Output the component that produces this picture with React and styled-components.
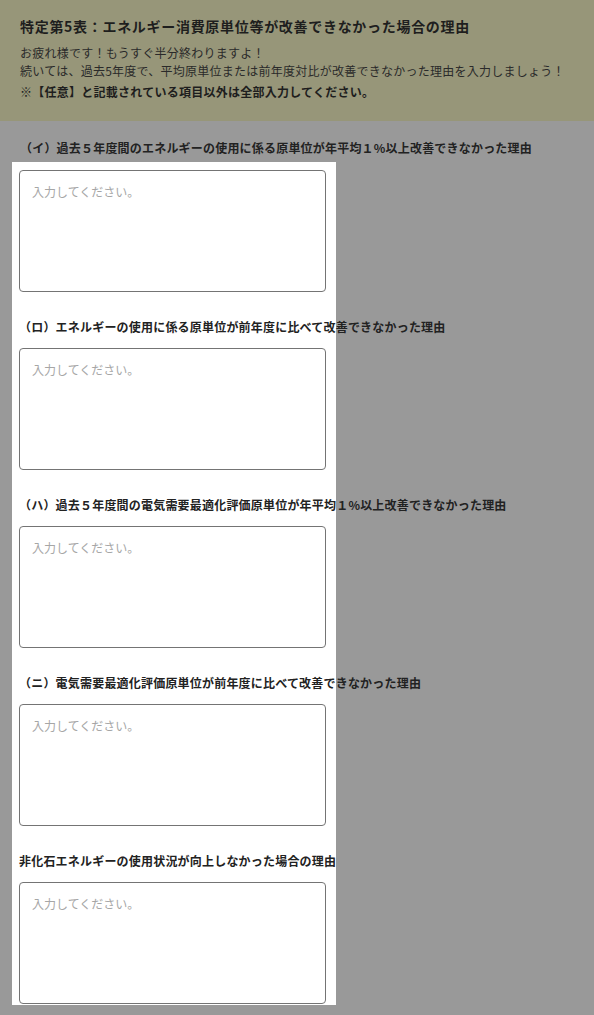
import React from 'react'
import styled, { createGlobalStyle } from 'styled-components'

const GlobalStyle = createGlobalStyle`
  html, body {
    margin: 0;
    padding: 0;
    background-color: #999999;
    font-family: "Noto Sans CJK JP", "Noto Sans", sans-serif;
    color: #222;
  }
  * {
    box-sizing: border-box;
  }
`;

const Page = styled.div`
  min-height: 1015px;
  background-color: #999999;
  overflow: hidden;
`;

const Header = styled.div`
  background-color: #979679;
  padding: 16px 20px 20px 20px;
`;

const Title = styled.h1`
  margin: 0 0 8px 0;
  font-size: 14px;
  line-height: 20px;
  letter-spacing: 0.7px;
  font-weight: 700;
  color: #1e1e1e;
`;

const Lead = styled.p`
  margin: 0;
  font-size: 12px;
  line-height: 18px;
  letter-spacing: 0.25px;
  color: #2a2a2a;
`;

const Note = styled.p`
  margin: 3px 0 0 0;
  font-size: 12px;
  line-height: 18px;
  letter-spacing: 0.25px;
  font-weight: 700;
  color: #1e1e1e;
`;

const Main = styled.div`
  padding: 18px 0 0 12px;
`;

const Label = styled.div`
  font-size: 12px;
  line-height: 18px;
  letter-spacing: 0.2px;
  font-weight: 700;
  color: #222;
  white-space: nowrap;
  padding-left: ${props => props.$outside ? '8px' : '0'};
  margin: ${props => props.$outside ? '0 0 5px 0' : '26px 0 12px 0'};
`;

const Panel = styled.div`
  width: 324px;
  background-color: #fff;
  padding: 8px 10px 0 7px;
  height: 843px;
`;

const TextArea = styled.textarea`
  display: block;
  width: 307px;
  height: 122px;
  border: 1px solid #747474;
  border-radius: 4px;
  padding: 12px 12px;
  resize: none;
  outline: none;
  font-family: inherit;
  font-size: 12px;
  line-height: 18px;
  background: #fff;
  &::placeholder {
    color: #a6a6a6;
  }
`;

const fields = [
  '（ロ）エネルギーの使用に係る原単位が前年度に比べて改善できなかった理由',
  '（ハ）過去５年度間の電気需要最適化評価原単位が年平均１%以上改善できなかった理由',
  '（ニ）電気需要最適化評価原単位が前年度に比べて改善できなかった理由',
  '非化石エネルギーの使用状況が向上しなかった場合の理由',
];

export default function App() {
  return (
    <Page>
      <GlobalStyle />
      <Header>
        <Title>特定第5表：エネルギー消費原単位等が改善できなかった場合の理由</Title>
        <Lead>お疲れ様です！もうすぐ半分終わりますよ！</Lead>
        <Lead>続いては、過去5年度で、平均原単位または前年度対比が改善できなかった理由を入力しましょう！</Lead>
        <Note>※【任意】と記載されている項目以外は全部入力してください。</Note>
      </Header>
      <Main>
        <Label $outside>（イ）過去５年度間のエネルギーの使用に係る原単位が年平均１%以上改善できなかった理由</Label>
        <Panel>
          <TextArea placeholder="入力してください。" />
          {fields.map((text, key) => (
            <React.Fragment key={key}>
              <Label>{text}</Label>
              <TextArea placeholder="入力してください。" />
            </React.Fragment>
          ))}
        </Panel>
      </Main>
    </Page>
  )
}
